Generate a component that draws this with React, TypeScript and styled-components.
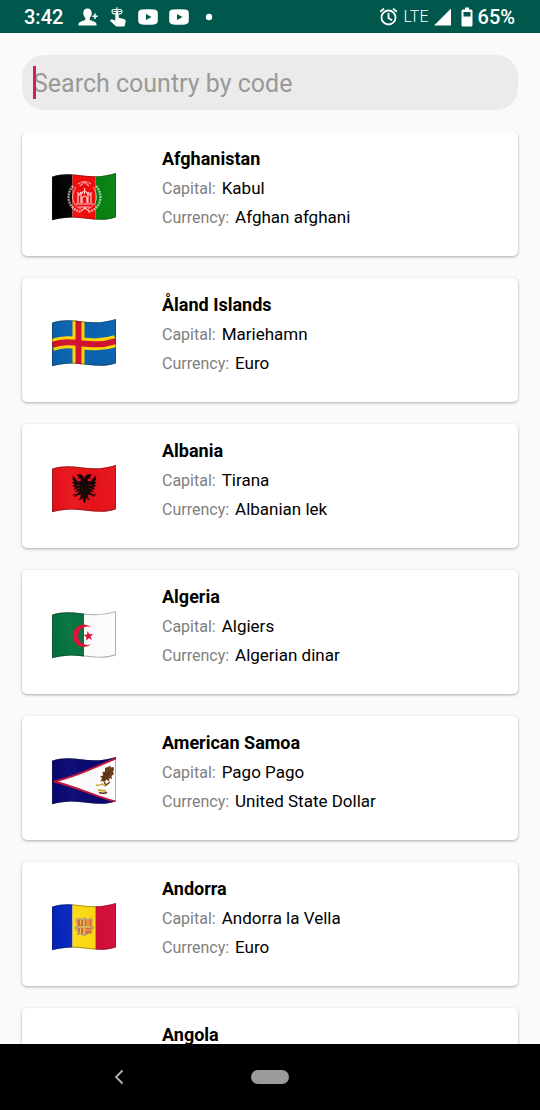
import React, { ReactNode, useId, useState } from "react";
import styled, { createGlobalStyle } from "styled-components";

const GlobalStyle = createGlobalStyle`
  *, *::before, *::after { box-sizing: border-box; }
  body {
    margin: 0;
    background: #fafafa;
    font-family: Roboto, "Noto Sans", sans-serif;
  }
`;

const Screen = styled.div`
  display: flex;
  flex-direction: column;
  height: 100vh;
  overflow: hidden;
  background: #fafafa;
`;

const StatusBar = styled.header`
  display: flex;
  flex: none;
  align-items: center;
  justify-content: space-between;
  height: 33px;
  padding: 0 25px 0 24px;
  background: #00574b;
  color: #fff;
`;

const StatusGroup = styled.div<{ $gap: number }>`
  display: flex;
  align-items: center;
  gap: ${(p) => p.$gap}px;
`;

const StatusText = styled.span<{ $light?: boolean }>`
  font-size: ${(p) => (p.$light ? 16 : 20)}px;
  font-weight: ${(p) => (p.$light ? 300 : 500)};
  line-height: 24px;
`;

const Clock = styled(StatusText)`
  margin-right: 4px;
`;

const Icon = styled.svg`
  display: block;
  flex: none;
`;

const Content = styled.main`
  display: flex;
  flex: 1;
  flex-direction: column;
  gap: 22px;
  min-height: 0;
  padding: 22px 22px 0;
`;

const SearchField = styled.label`
  position: relative;
  display: flex;
  flex: none;
  height: 55px;
  border-radius: 22px;
  background: #ebebeb;
`;

const SearchInput = styled.input`
  flex: 1;
  min-width: 0;
  padding: 2px 11px 0;
  border: 0;
  outline: 0;
  background: transparent;
  color: #212121;
  font: 400 25px Roboto, "Noto Sans", sans-serif;
  caret-color: transparent;

  &::placeholder {
    color: #999;
    opacity: 1;
  }
`;

const Caret = styled.span`
  position: absolute;
  top: 11px;
  left: 11px;
  width: 3px;
  height: 33px;
  background: #d81b60;
`;

const CountryList = styled.ul`
  display: flex;
  flex: 1;
  flex-direction: column;
  gap: 22px;
  min-height: 0;
  margin: 0 -22px;
  padding: 0 22px;
  overflow: hidden auto;
  scrollbar-width: none;
  list-style: none;
`;

const Card = styled.li`
  display: flex;
  flex: none;
  gap: 46px;
  min-height: 124px;
  padding: 12px 30px;
  border-radius: 5px;
  background: #fff;
  box-shadow: 0 1px 3px rgba(0, 0, 0, 0.32);
`;

const FlagSlot = styled.div`
  flex: none;
  width: 64px;
  padding-top: 28px;
`;

const CountryName = styled.h2`
  margin: 0;
  color: #000;
  font-size: 18px;
  font-weight: 700;
  line-height: 30px;
`;

const Detail = styled.p`
  display: flex;
  align-items: baseline;
  gap: 6px;
  margin: 0;
  color: #000;
  font-size: 17px;
  line-height: 28px;
`;

const DetailLabel = styled.span`
  color: #808080;
  font-size: 16px;
`;

const NavBar = styled.nav`
  display: grid;
  flex: none;
  grid-template-columns: 1fr auto 1fr;
  align-items: center;
  height: 66px;
  background: #000;
`;

const BackButton = styled.button`
  display: flex;
  align-items: center;
  justify-content: center;
  justify-self: center;
  width: 48px;
  height: 48px;
  padding: 0 14px 0 0;
  border: 0;
  background: transparent;
`;

const HomeButton = styled.button`
  width: 38px;
  height: 14px;
  padding: 0;
  border: 0;
  border-radius: 7px;
  background: #9b9b9b;
`;

const VideoIcon = () => (
  <Icon width="20" height="16" viewBox="0 0 20 16">
    <path fill="#fff" fillRule="evenodd" d="M4 .6Q10-.2 16 .6 19.800 1 19.800 4V12Q19.800 15 16 15.400 10 16 4 15.400.2 15 .2 12V4Q.2 1 4 .6ZM8 5V11L13.500 8Z" />
  </Icon>
);

const WAVE = "M0 4.700C22-3 36 10 64 1V45.300C42 53 28 40 0 48.300Z";

function Flag({ name, children }: { name: string; children: ReactNode }) {
  const id = useId();
  return (
    <Icon width="64" height="50" viewBox="0 0 64 50" role="img" aria-label={`Flag of ${name}`}>
      <defs>
        <clipPath id={`${id}c`}><path d={WAVE} /></clipPath>
        <linearGradient id={`${id}g`} x1="0" y1="0.100" x2="1" y2="0">
          <stop offset="0" stopColor="#000" stopOpacity="0.030" />
          <stop offset="0.250" stopColor="#fff" stopOpacity="0.030" />
          <stop offset="0.600" stopColor="#000" stopOpacity="0.020" />
          <stop offset="1" stopColor="#fff" stopOpacity="0.030" />
        </linearGradient>
      </defs>
      <g clipPath={`url(#${id}c)`}>
        {children}
        <path d={WAVE} fill={`url(#${id}g)`} stroke="#222" strokeOpacity="0.350" strokeWidth="2" />
      </g>
    </Icon>
  );
}

const Bands = ({ colors }: { colors: [string, string, string] }) => (
  <>
    <path fill={colors[0]} d="M0 0H20.500V50H0Z" />
    <path fill={colors[1]} d="M20.500 0H43.500V50H20.500Z" />
    <path fill={colors[2]} d="M43.500 0H64V50H43.500Z" />
  </>
);

const AfghanFlag = (
  <>
    <Bands colors={["#000", "#f50a0a", "#078211"]} />
    <g fill="none" stroke="#fff" strokeOpacity="0.600">
      <path d="M21 14C13 23 16 37 29 40M44 14C52 23 49 37 36 40" strokeWidth="2.400" strokeDasharray="2 .8" />
      <path d="M24 15C18 24 20 33 29 37M41 15C47 24 45 33 36 37" strokeWidth="1" />
      <path d="M26 12Q32.500 7 39 12M28 14L32.500 10 37 14" strokeWidth="1.200" />
    </g>
    <path fill="none" stroke="#fff" strokeOpacity="0.800" strokeWidth="1.200" d="M26 31V24Q28 22 29 20V31M39 31V24Q37 22 36 20V31M29 23Q32.500 15 36 23M30 31V26Q32.500 22 35 26V31M24 32H41M27 35H38M32.500 16V22M26 20V23M39 20V23M29 39L33 36 37 39" />
  </>
);

const AlandFlag = (
  <>
    <path fill="#0a62b0" d="M0 0H64V50H0Z" />
    <path d="M26.500 0V50M0 27C22 19 36 32 64 23" fill="none" stroke="#ffd600" strokeWidth="12" />
    <path d="M26.500 0V50M0 27C22 19 36 32 64 23" fill="none" stroke="#d3102f" strokeWidth="6" />
  </>
);

const AlbanianFlag = (
  <>
    <path fill="#e8131a" d="M0 0H64V50H0Z" />
    <path
      d="M32.300 14.500L31.500 12.500 29.500 10.500 26.500 10 24.500 12 27.500 12.500 25.500 14.500 28.500 14.500 29 17 26 17.500 20.500 11 21 14.500 20 15 22 17.500 20 18.500 22.500 20.500 20.500 22 23.500 23.500 21.500 25.500 25 26 22.500 28.500 27.500 27 24.500 30 21.500 30 20.500 31.500 23 31 22.500 33.500 25 31.500 29 30.500 28 34.500 26 36 29 35.500 30.500 33.500 31 37 32.300 39.500 33.600 37 34.100 33.500 35.600 35.500 38.600 36 36.600 34.500 35.600 30.500 39.600 31.500 42.100 33.500 41.600 31 44.100 31.500 43.100 30 40.100 30 37.100 27 42.100 28.500 39.600 26 43.100 25.500 41.100 23.500 44.100 22 42.100 20.500 44.600 18.500 42.600 17.500 44.600 15 43.600 14.500 44.100 11 38.600 17.500 35.600 17 36.100 14.500 39.100 14.500 37.100 12.500 40.100 12 38.100 10 35.100 10.500 33.100 12.500Z"
      fill="#160707"
    />
    <path d="M23 26L28 24M24 22L28 21M41.600 26L36.600 24M40.600 22L36.600 21" stroke="#c81318" strokeWidth="0.600" />
  </>
);

const AlgerianFlag = (
  <>
    <path fill="#fff" d="M0 0H64V50H0Z" />
    <path fill="#04733f" d="M0 0H32V50H0Z" />
    <path fill="#dc1235" d="M39.500 17.500A11.200 11.200 0 1 0 39.500 34A9.200 9.200 0 1 1 39.500 17.500Z" />
    <path fill="#dc1235" d="M35.500 21L37.300 24.200 41.200 23.800 38.500 26.400 40.100 29.800 36.800 28.200 33.900 30.500 34.400 26.900 31.500 25 35 24.500Z" />
  </>
);

const SamoanFlag = (
  <>
    <path fill="#080873" d="M0 0H64V50H0Z" />
    <path fill="#fff" stroke="#c4143a" strokeWidth="2" d="M2 25.500C24 21 38 13 65 2V46C45 41 25 31 2 25.500Z" />
    <path fill="#6a3c18" d="M53 12L57 10.500 59 9.500 58.500 11.500 61.500 11 62 13.500 61 16 62 18 59.500 20 60 23 57.500 22 57 25.500 54.500 23.500 52.500 26 50.500 25 48.500 25.500 50 22 48 20.500 51 19.500 50.500 16 53 15.500Z" />
    <path d="M52 18L56 19 58 15M51 21L55 22" stroke="#3f220c" strokeWidth="1" fill="none" />
    <path d="M44 29Q47 30 50 28L53 30 57 27" stroke="#c79a2c" strokeWidth="1.400" fill="none" />
    <path d="M52 26L54 29 58 26" stroke="#7b4519" strokeWidth="1.500" fill="none" />
    <path d="M46 34L54 35" stroke="#d6ae27" strokeWidth="1.800" fill="none" />
    <path d="M47 36.500Q51 38 55 36.500" stroke="#563211" strokeWidth="1.500" fill="none" />
  </>
);

const AndorranFlag = (
  <>
    <Bands colors={["#0525bd", "#ffdb12", "#d30d39"]} />
    <path fill="#bea26c" d="M23 17L28 15.500 30 17 32 15 35 17 40 16 41 19 40 22 42 26 40 29 40 32 36 32 33 34.500 29 33 25 33 25 29 22 26 25 23Z" />
    <path fill="#d96238" d="M26 18H31V24H26ZM33 18H39V24H33ZM26 26H31V32L27 30ZM34 26H39V30L34 32Z" />
    <path d="M28.500 18V23M35 18V24M37 18V24M28.500 26V31M34 28H39M26 25H39M32 18V32" stroke="#efc54c" strokeWidth="1" />
  </>
);

type Country = { name: string; capital?: string; currency?: string; flag?: ReactNode };

const countries: Country[] = [
  { name: "Afghanistan", capital: "Kabul", currency: "Afghan afghani", flag: AfghanFlag },
  { name: "Åland Islands", capital: "Mariehamn", currency: "Euro", flag: AlandFlag },
  { name: "Albania", capital: "Tirana", currency: "Albanian lek", flag: AlbanianFlag },
  { name: "Algeria", capital: "Algiers", currency: "Algerian dinar", flag: AlgerianFlag },
  { name: "American Samoa", capital: "Pago Pago", currency: "United State Dollar", flag: SamoanFlag },
  { name: "Andorra", capital: "Andorra la Vella", currency: "Euro", flag: AndorranFlag },
  { name: "Angola" },
];

function CountryCard({ name, capital, currency, flag }: Country) {
  return (
    <Card>
      <FlagSlot>{flag && <Flag name={name}>{flag}</Flag>}</FlagSlot>
      <div>
        <CountryName>{name}</CountryName>
        {capital && <Detail><DetailLabel>Capital:</DetailLabel> <span>{capital}</span></Detail>}
        {currency && <Detail><DetailLabel>Currency:</DetailLabel> <span>{currency}</span></Detail>}
      </div>
    </Card>
  );
}

export default function App() {
  const [query, setQuery] = useState("");
  return (
    <Screen>
      <GlobalStyle />
      <StatusBar>
        <StatusGroup $gap={11}>
          <Clock>3:42</Clock>
          <Icon width="20" height="18" viewBox="0 0 20 18">
            <path fill="#fff" d="M9.500.5C6.500.5 5 2.500 5.300 5.500 5.500 8 6.500 9 7.300 10V11.500C6.500 13 1 13 .5 16V17.500H18.500V16C18 13 12.500 13 11.700 11.500V10C12.500 9 13.500 8 13.700 5.500 14 2.500 12.500.5 9.500.5Z" />
            <path stroke="#fff" strokeWidth="1.500" d="M17 5.500V11M14.300 8.200H19.700" />
          </Icon>
          <Icon width="18" height="20" viewBox="0 0 18 20">
            <path fill="#fff" d="M6.300 6.500Q6.500 5 8 5T9.700 6.500V10.800L15 12Q17 12.700 16.700 14.500L15.800 18.500Q15.500 19.500 14.500 19.500H8Q7 19.500 6.300 18.700L1 13.800 1.700 12.700Q2.500 12 3.500 12.400L6.300 13.500Z" />
            <path fill="none" stroke="#fff" strokeWidth="1.200" d="M8 .3V6M7.500 2.500H5Q3 2.500 3 4.500T5 6.800H6.500M9 2.500H11Q13 2.500 13 4.500T11 6.800H10M4.500 4.500H12" />
          </Icon>
          <VideoIcon />
          <VideoIcon />
          <Icon width="18" height="8" viewBox="0 0 18 8"><circle cx="9" cy="4" r="3.200" fill="#fff" /></Icon>
        </StatusGroup>
        <StatusGroup $gap={5}>
          <Icon width="20" height="20" viewBox="0 0 20 20" fill="none" stroke="#fff" strokeWidth="1.800">
            <circle cx="9.500" cy="10.500" r="7" />
            <path d="M1.200 4.800L5 1.600M17.800 4.800L14 1.600M9.500 6V11L13 13.300" />
          </Icon>
          <StatusText $light>LTE</StatusText>
          <Icon width="22" height="18" viewBox="0 0 22 18"><path fill="#fff" d="M0 17.500L17 .5V17.500Z" /></Icon>
          <Icon width="12" height="20" viewBox="0 0 12 20">
            <path fill="#fff" fillRule="evenodd" d="M4 .5H8V2.500H10Q11.500 2.500 11.500 4V18Q11.500 19.500 10 19.500H2Q.5 19.500.5 18V4Q.5 2.500 2 2.500H4ZM2.500 5V9.500H9.500V5Z" />
          </Icon>
          <StatusText>65%</StatusText>
        </StatusGroup>
      </StatusBar>
      <Content>
        <SearchField>
          <SearchInput
            type="text"
            aria-label="Search country by code"
            placeholder="Search country by code"
            value={query}
            onChange={(e) => setQuery(e.target.value)}
          />
          {!query && <Caret />}
        </SearchField>
        <CountryList>
          {countries.map((c) => <CountryCard key={c.name} {...c} />)}
        </CountryList>
      </Content>
      <NavBar>
        <BackButton type="button" aria-label="Back">
          <Icon width="10" height="16" viewBox="0 0 10 16"><path fill="none" stroke="#b5b5b5" strokeWidth="1.800" d="M8.500 1.500L2 8 8.500 14.500" /></Icon>
        </BackButton>
        <HomeButton type="button" aria-label="Home" />
      </NavBar>
    </Screen>
  );
}
